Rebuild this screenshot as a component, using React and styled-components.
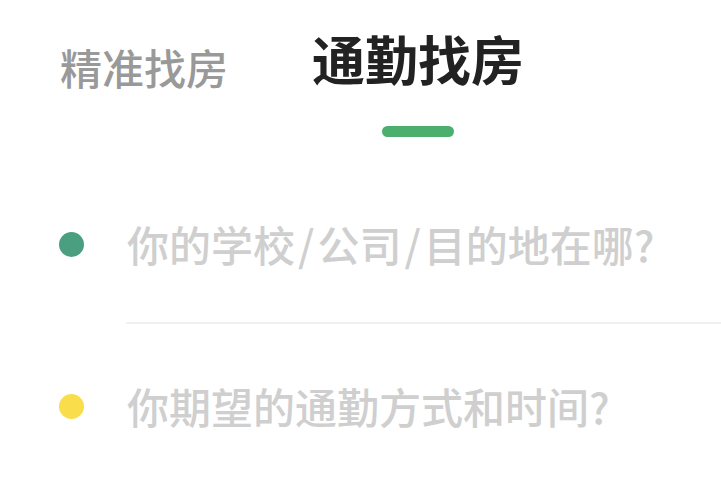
import React from "react";
import styled, { createGlobalStyle } from "styled-components";

const Global = createGlobalStyle`
  html, body { margin: 0; padding: 0; background: #fff; }
  body { font-family: "Noto Sans CJK SC", "Noto Sans", sans-serif; }
`;

const Page = styled.div`
  width: 721px;
  height: 478px;
  overflow: hidden;
  background: #fff;
  display: flex;
  flex-direction: column;
`;

const Tabs = styled.div`
  display: flex;
  align-items: flex-start;
  gap: 84px;
  padding: 32px 0 0 60px;
`;

const Tab = styled.div`
  display: flex;
  flex-direction: column;
  align-items: center;
`;

const TabLabel = styled.div`
  font-size: ${(p) => (p.$active ? "53px" : "42px")};
  font-weight: ${(p) => (p.$active ? 700 : 500)};
  color: ${(p) => (p.$active ? "#222" : "#999")};
  line-height: 1;
  margin-top: ${(p) => (p.$active ? "0" : "14px")};
  white-space: nowrap;
`;

const Indicator = styled.div`
  width: 72px;
  height: 11px;
  border-radius: 6px;
  margin-top: 41px;
  background: ${(p) => (p.$show ? "#4caf6e" : "transparent")};
`;

const Form = styled.div`
  display: flex;
  flex-direction: column;
  margin-top: 64px;
`;

const Row = styled.div`
  display: flex;
  align-items: center;
  height: 80px;
  padding-left: 59px;
  gap: 43px;
`;

const Dot = styled.span`
  width: 25px;
  height: 25px;
  border-radius: 50%;
  background: ${(p) => p.$color};
  flex: none;
`;

const Placeholder = styled.div`
  font-size: 42px;
  font-weight: 500;
  color: #cfcfcf;
  line-height: 1;
  white-space: nowrap;
`;

const Slash = styled.span`
  margin: 0 3px;
`;

const Divider = styled.div`
  height: 2px;
  background: #f0f0f0;
  margin: 38px 0 42px 126px;
`;

export default function App() {
  return (
    <Page>
      <Global />
      <Tabs>
        <Tab>
          <TabLabel>精准找房</TabLabel>
          <Indicator />
        </Tab>
        <Tab>
          <TabLabel $active>通勤找房</TabLabel>
          <Indicator $show />
        </Tab>
      </Tabs>
      <Form>
        <Row>
          <Dot $color="#4a9f80" />
          <Placeholder>
            你的学校<Slash>/</Slash>公司<Slash>/</Slash>目的地在哪?
          </Placeholder>
        </Row>
        <Divider />
        <Row>
          <Dot $color="#f9dd4a" />
          <Placeholder>你期望的通勤方式和时间?</Placeholder>
        </Row>
      </Form>
    </Page>
  );
}
